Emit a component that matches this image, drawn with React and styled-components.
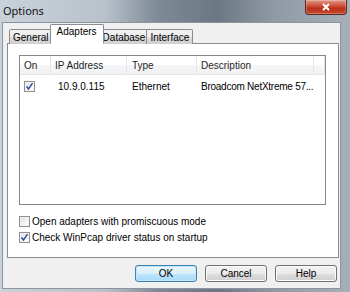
import React from "react";
import styled, { createGlobalStyle } from "styled-components";

const GlobalStyle = createGlobalStyle`
  html, body {
    margin: 0;
    padding: 0;
    width: 350px;
    height: 292px;
    overflow: hidden;
  }
  body {
    font-family: "Liberation Sans", "Noto Sans", sans-serif;
    font-size: 10px;
    color: #000;
  }
`;

const Window = styled.div`
  width: 350px;
  height: 292px;
  display: flex;
  flex-direction: column;
  background: linear-gradient(
    90deg,
    #c9d1d9 0%,
    #b9c2cb 30%,
    #7e8a96 45%,
    #6b7782 62%,
    #8e99a4 78%,
    #a7b0b9 100%
  );
`;

const TitleBar = styled.div`
  height: 22px;
  display: flex;
  align-items: flex-start;
  justify-content: space-between;
`;

const Title = styled.span`
  margin: 3px 0 0 3px;
  font-family: "Noto Sans", "Liberation Sans", sans-serif;
  font-size: 11px;
  color: #111;
`;

const CloseButton = styled.div`
  width: 40px;
  height: 14px;
  margin-right: 3px;
  border: 1px solid #5a2a22;
  border-top: none;
  border-radius: 0 0 4px 4px;
  background: linear-gradient(180deg, #e09a8a 0%, #cc4a35 45%, #b8301c 60%, #c84a30 100%);
  display: flex;
  align-items: center;
  justify-content: center;
  box-shadow: inset 0 0 0 1px rgba(255, 255, 255, 0.25);
`;

const Client = styled.div`
  flex: 1;
  margin: 0 9px 3px 2px;
  background: #f0f0f0;
  border: 1px solid #8c959e;
  display: flex;
  flex-direction: column;
  padding: 4px 2px 0 4px;
`;

const Tabs = styled.div`
  display: flex;
  align-items: flex-end;
  padding-left: 2px;
  height: 17px;
  position: relative;
  z-index: 1;
`;

const Tab = styled.div`
  height: ${(p) => (p.$active ? "17px" : "14px")};
  padding: 0 ${(p) => (p.$active ? "6px" : "3px")};
  margin: 0 ${(p) => (p.$active ? "-2px" : "0")};
  display: flex;
  align-items: ${(p) => (p.$active ? "flex-start" : "center")};
  padding-top: ${(p) => (p.$active ? "1px" : "0")};
  border: 1px solid #898c95;
  border-bottom: ${(p) => (p.$active ? "1px solid #fff" : "none")};
  border-radius: 2px 2px 0 0;
  background: ${(p) =>
    p.$active ? "#fff" : "linear-gradient(180deg, #f2f2f2 0%, #ebebeb 50%, #dddddd 51%, #cfcfcf 100%)"};
  z-index: ${(p) => (p.$active ? 2 : 1)};
  & + & {
    margin-left: ${(p) => (p.$active ? "-3px" : "-1px")};
  }
`;

const Panel = styled.div`
  height: 215px;
  width: 332px;
  margin-top: -1px;
  background: #fff;
  border: 1px solid #898c95;
  padding: 11px 0 0 11px;
  box-sizing: border-box;
  display: flex;
  flex-direction: column;
`;

const ListBox = styled.div`
  width: 307px;
  height: 150px;
  box-sizing: border-box;
  border: 1px solid #828790;
  background: #fff;
`;

const columns = "31px 76px 70px 117px 1fr";

const HeaderRow = styled.div`
  display: grid;
  grid-template-columns: ${columns};
  height: 18px;
  background: linear-gradient(180deg, #ffffff 0%, #ffffff 50%, #f5f6f8 51%, #f1f2f4 100%);
  border-bottom: 1px solid #e4e6ea;
`;

const HeaderCell = styled.div`
  display: flex;
  align-items: center;
  padding-left: ${(p) => p.$pad || 4}px;
  border-right: 1px solid #e3e5e8;
  color: #1e1e1e;
  white-space: nowrap;
`;

const DataRow = styled.div`
  display: grid;
  grid-template-columns: ${columns};
  height: 16px;
  margin-top: 3px;
`;

const Cell = styled.div`
  display: flex;
  align-items: center;
  padding-left: ${(p) => p.$pad || 5}px;
  white-space: nowrap;
  letter-spacing: ${(p) => (p.$tight ? "-0.25px" : "normal")};
`;

const Options = styled.div`
  display: flex;
  flex-direction: column;
  gap: 4px;
  margin-top: 10px;
`;

const OptionRow = styled.label`
  display: flex;
  align-items: center;
  gap: 2px;
  height: 12px;
`;

const Box = styled.span`
  width: 11px;
  height: 11px;
  box-sizing: border-box;
  border: 1px solid #8e8f8f;
  background: linear-gradient(135deg, #dcdcdc 0%, #f4f4f4 60%, #ffffff 100%);
  box-shadow: inset 0 0 0 1px #f4f4f4;
  display: flex;
  align-items: center;
  justify-content: center;
`;

const ButtonRow = styled.div`
  display: flex;
  justify-content: flex-end;
  gap: 8px;
  padding: 7px 1px 0 0;
`;

const Button = styled.div`
  width: 62px;
  height: 17px;
  box-sizing: border-box;
  border: 1px solid ${(p) => (p.$default ? "#3c7fb1" : "#707070")};
  border-radius: 3px;
  background: ${(p) =>
    p.$default
      ? "linear-gradient(180deg, #eaf6fd 0%, #d9f0fc 50%, #bee6fd 51%, #a7d9f5 100%)"
      : "linear-gradient(180deg, #f2f2f2 0%, #ebebeb 50%, #dddddd 51%, #cfcfcf 100%)"};
  box-shadow: inset 0 0 0 1px ${(p) => (p.$default ? "#c4e5f6" : "#fcfcfc")};
  display: flex;
  align-items: center;
  justify-content: center;
`;

const Check = () => (
  <svg width="9" height="9" viewBox="0 0 9 9">
    <path d="M1.5 4.5 L3.5 7 L7.5 1.2" fill="none" stroke="#2a4a9a" strokeWidth="1.4" />
  </svg>
);

const CheckBox = ({ checked }) => <Box>{checked && <Check />}</Box>;

const CloseX = () => (
  <svg width="10" height="8" viewBox="0 0 10 8">
    <path d="M2 1 L8 7 M8 1 L2 7" stroke="#fff" strokeWidth="2" />
  </svg>
);

export default function App() {
  return (
    <>
      <GlobalStyle />
      <Window>
        <TitleBar>
          <Title>Options</Title>
          <CloseButton>
            <CloseX />
          </CloseButton>
        </TitleBar>
        <Client>
          <Tabs>
            <Tab>General</Tab>
            <Tab $active>Adapters</Tab>
            <Tab>Database</Tab>
            <Tab>Interface</Tab>
          </Tabs>
          <Panel>
            <ListBox>
              <HeaderRow>
                <HeaderCell>On</HeaderCell>
                <HeaderCell>IP Address</HeaderCell>
                <HeaderCell $pad={5}>Type</HeaderCell>
                <HeaderCell>Description</HeaderCell>
                <HeaderCell />
              </HeaderRow>
              <DataRow>
                <Cell $pad={4}>
                  <CheckBox checked />
                </Cell>
                <Cell $pad={7}>10.9.0.115</Cell>
                <Cell $pad={5}>Ethernet</Cell>
                <Cell $pad={4} $tight>
                  Broadcom NetXtreme 57...
                </Cell>
              </DataRow>
            </ListBox>
            <Options>
              <OptionRow>
                <CheckBox />
                Open adapters with promiscuous mode
              </OptionRow>
              <OptionRow>
                <CheckBox checked />
                Check WinPcap driver status on startup
              </OptionRow>
            </Options>
          </Panel>
          <ButtonRow>
            <Button $default>OK</Button>
            <Button>Cancel</Button>
            <Button>Help</Button>
          </ButtonRow>
        </Client>
      </Window>
    </>
  );
}
